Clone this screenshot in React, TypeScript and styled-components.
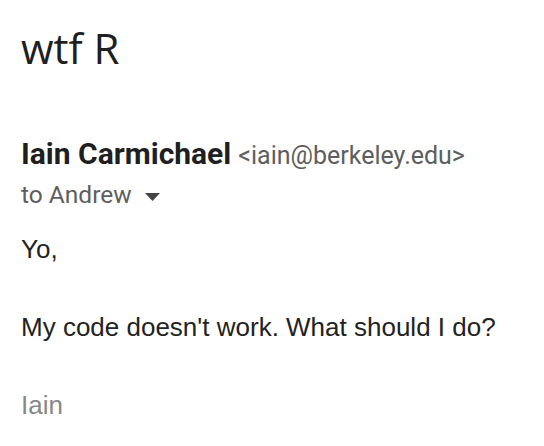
import React from "react";
import styled, { createGlobalStyle } from "styled-components";

const Global = createGlobalStyle`
  html, body { margin: 0; padding: 0; background: #ffffff; }
  body { -webkit-font-smoothing: antialiased; }
`;

const Page = styled.div`
  display: flex;
  flex-direction: column;
  padding: 24px 0 0 21px;
  width: 544px;
  box-sizing: border-box;
`;

const Subject = styled.h1`
  margin: 0;
  font-family: "Open Sans", "Noto Sans", sans-serif;
  font-weight: 400;
  font-size: 42px;
  line-height: 48px;
  color: #1f1f1f;
`;

const Header = styled.div`
  display: flex;
  flex-direction: column;
  gap: 7px;
  margin-top: 66px;
`;

const FromRow = styled.div`
  display: flex;
  align-items: baseline;
  gap: 7px;
  font-family: Roboto, "Liberation Sans", sans-serif;
  line-height: 32px;
`;

const Name = styled.span`
  font-weight: 700;
  font-size: 30px;
  color: #1f1f1f;
`;

const Email = styled.span`
  font-size: 25px;
  color: #5e5e5e;
`;

const ToRow = styled.div`
  display: flex;
  align-items: center;
  gap: 13px;
  font-family: Roboto, "Liberation Sans", sans-serif;
  font-size: 24.5px;
  line-height: 32px;
  color: #5e5e5e;
`;

const Caret = styled.svg`
  width: 15px;
  height: 8px;
  margin-top: 3px;
`;

const Body = styled.div`
  margin-top: 19px;
  font-family: "Liberation Sans", Arial, sans-serif;
  font-size: 26px;
  line-height: 39px;
  color: #222222;
`;

const Line = styled.div<{ $muted?: boolean }>`
  min-height: 39px;
  color: ${(p) => (p.$muted ? "#888888" : "#222222")};
`;

export default function App() {
  return (
    <>
      <Global />
      <Page>
        <Subject>wtf R</Subject>
        <Header>
          <FromRow>
            <Name>Iain Carmichael</Name>
            <Email>&lt;iain@berkeley.edu&gt;</Email>
          </FromRow>
          <ToRow>
            <span>to Andrew</span>
            <Caret viewBox="0 0 15 8">
              <path d="M0 0 L15 0 L7.5 8 Z" fill="#444444" />
            </Caret>
          </ToRow>
        </Header>
        <Body>
          <Line>Yo,</Line>
          <Line />
          <Line>My code doesn't work. What should I do?</Line>
          <Line />
          <Line $muted>Iain</Line>
        </Body>
      </Page>
    </>
  );
}
